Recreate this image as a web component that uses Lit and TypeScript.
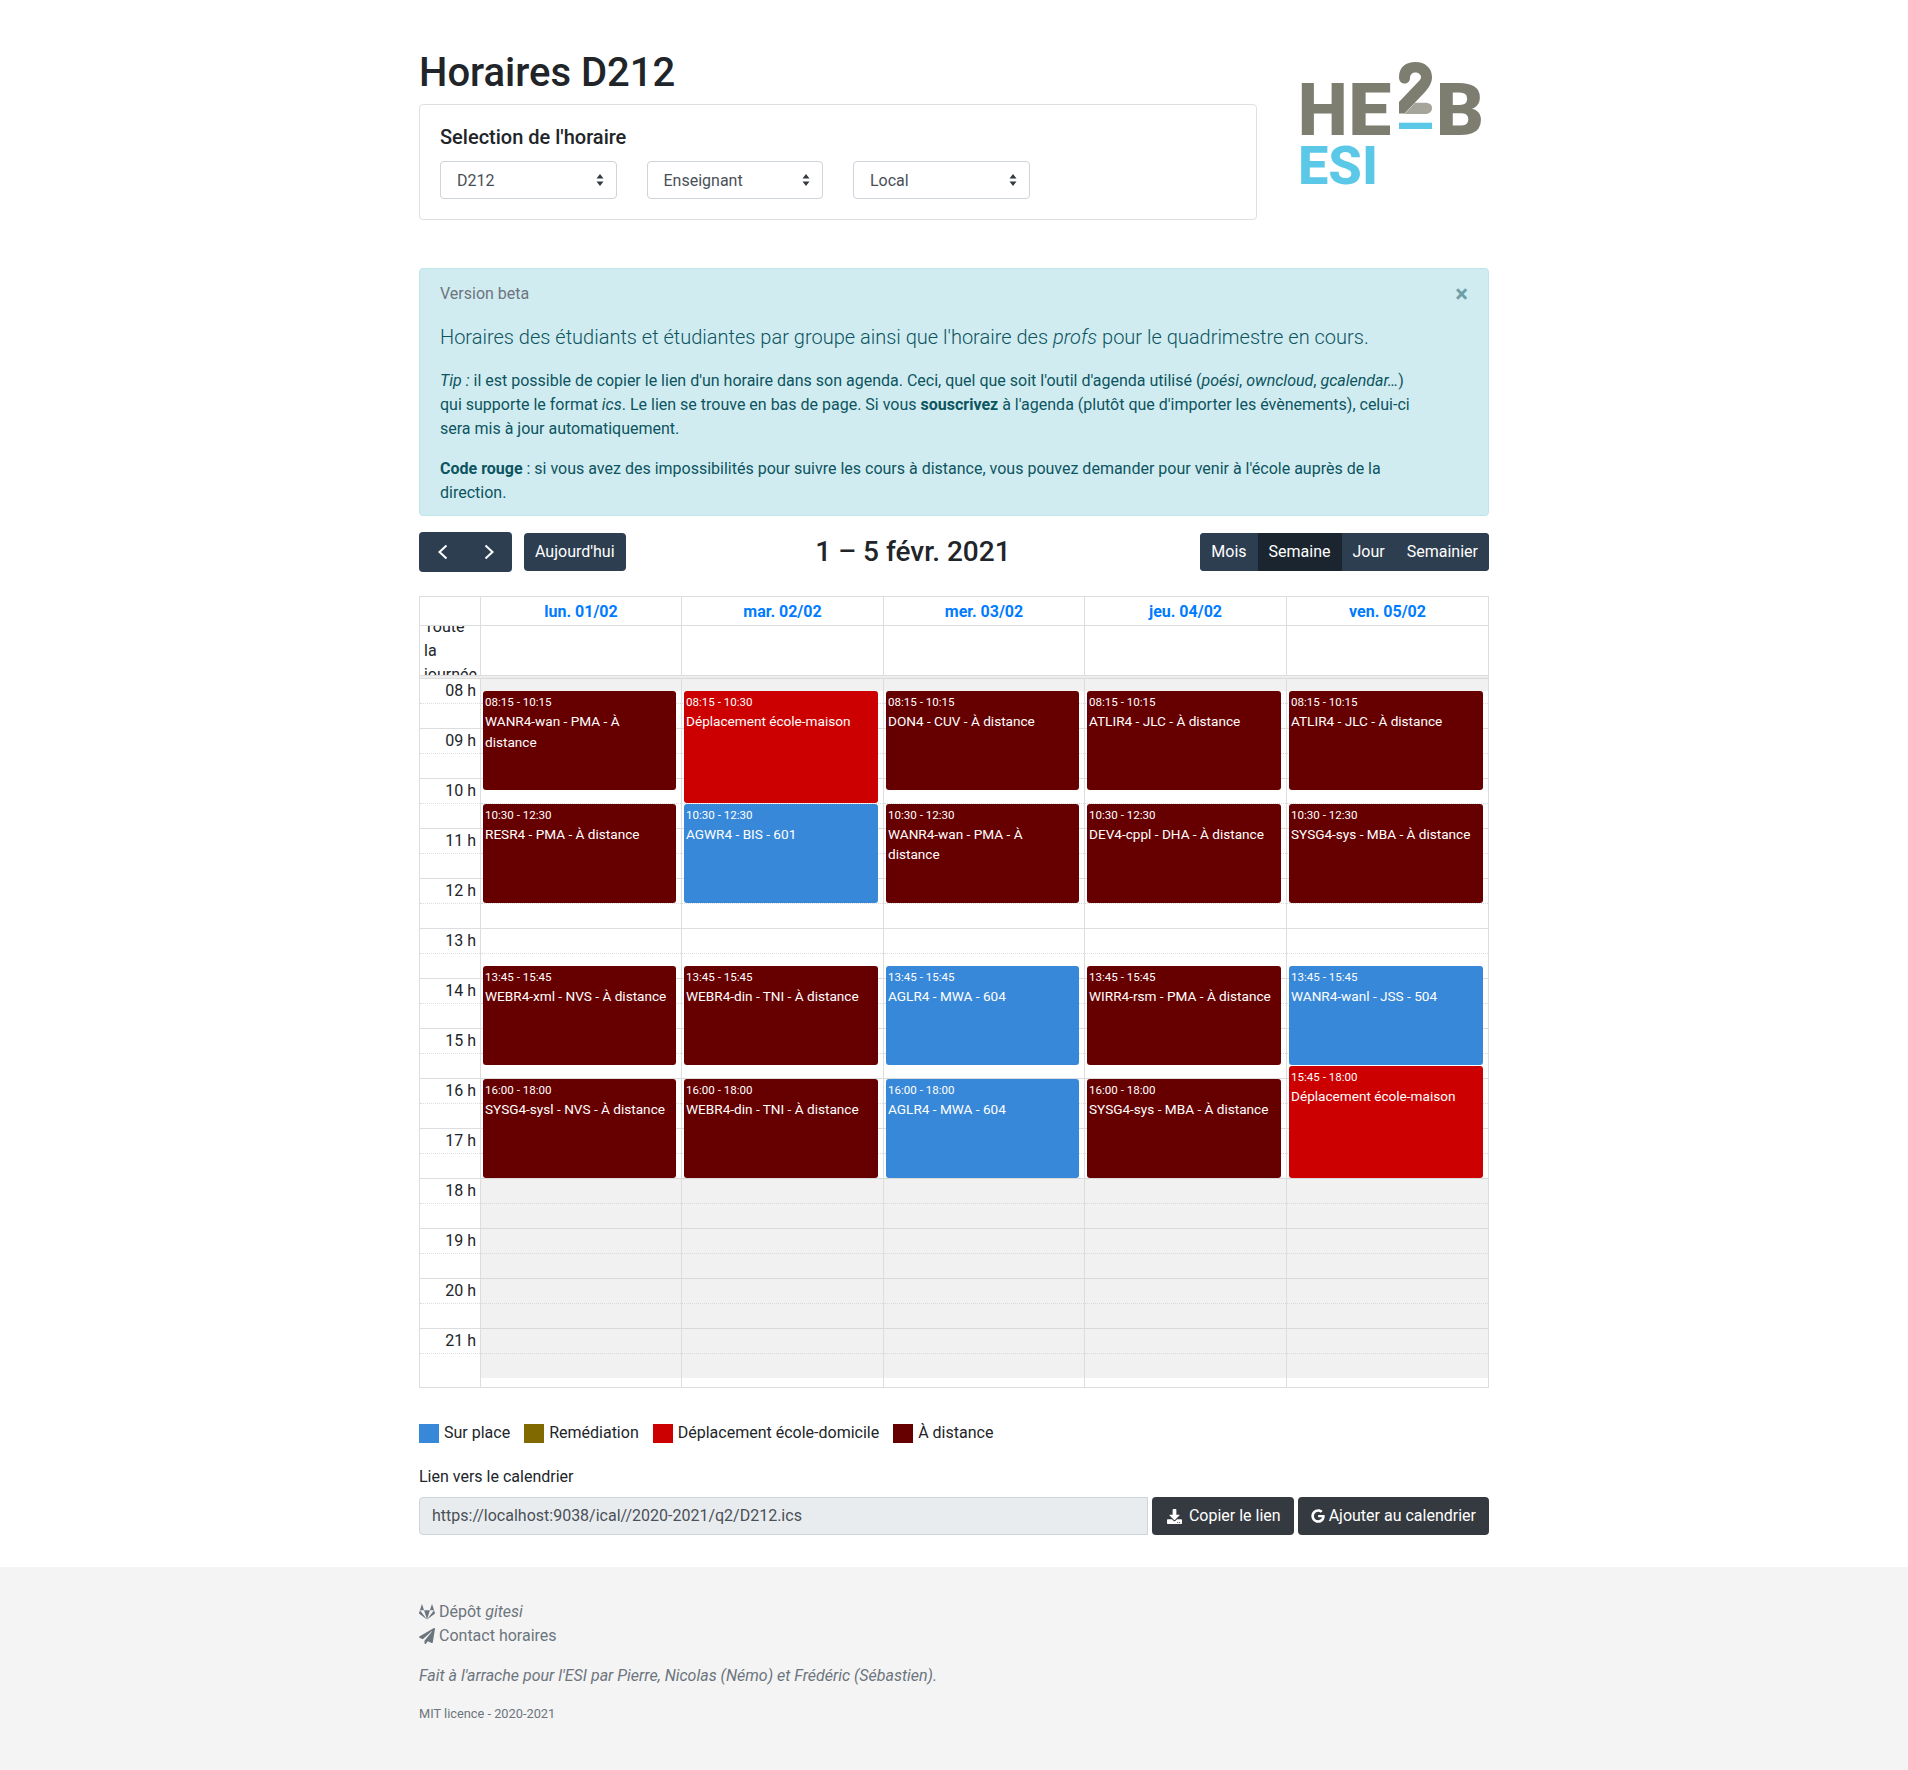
import { LitElement, html, css, svg } from 'lit';
import { customElement } from 'lit/decorators.js';

// Event kinds and their colours
const COLORS: Record<string, string> = {
  dist: '#660000',
  red: '#cc0000',
  place: '#3788d8',
  rem: '#806a00',
};

interface CalEvent {
  day: number;
  start: string;
  end: string;
  title: string;
  kind: string;
}

const EVENTS: CalEvent[] = [
  { day: 0, start: '08:15', end: '10:15', title: 'WANR4-wan - PMA - À distance', kind: 'dist' },
  { day: 0, start: '10:30', end: '12:30', title: 'RESR4 - PMA - À distance', kind: 'dist' },
  { day: 0, start: '13:45', end: '15:45', title: 'WEBR4-xml - NVS - À distance', kind: 'dist' },
  { day: 0, start: '16:00', end: '18:00', title: 'SYSG4-sysl - NVS - À distance', kind: 'dist' },
  { day: 1, start: '08:15', end: '10:30', title: 'Déplacement école-maison', kind: 'red' },
  { day: 1, start: '10:30', end: '12:30', title: 'AGWR4 - BIS - 601', kind: 'place' },
  { day: 1, start: '13:45', end: '15:45', title: 'WEBR4-din - TNI - À distance', kind: 'dist' },
  { day: 1, start: '16:00', end: '18:00', title: 'WEBR4-din - TNI - À distance', kind: 'dist' },
  { day: 2, start: '08:15', end: '10:15', title: 'DON4 - CUV - À distance', kind: 'dist' },
  { day: 2, start: '10:30', end: '12:30', title: 'WANR4-wan - PMA - À distance', kind: 'dist' },
  { day: 2, start: '13:45', end: '15:45', title: 'AGLR4 - MWA - 604', kind: 'place' },
  { day: 2, start: '16:00', end: '18:00', title: 'AGLR4 - MWA - 604', kind: 'place' },
  { day: 3, start: '08:15', end: '10:15', title: 'ATLIR4 - JLC - À distance', kind: 'dist' },
  { day: 3, start: '10:30', end: '12:30', title: 'DEV4-cppl - DHA - À distance', kind: 'dist' },
  { day: 3, start: '13:45', end: '15:45', title: 'WIRR4-rsm - PMA - À distance', kind: 'dist' },
  { day: 3, start: '16:00', end: '18:00', title: 'SYSG4-sys - MBA - À distance', kind: 'dist' },
  { day: 4, start: '08:15', end: '10:15', title: 'ATLIR4 - JLC - À distance', kind: 'dist' },
  { day: 4, start: '10:30', end: '12:30', title: 'SYSG4-sys - MBA - À distance', kind: 'dist' },
  { day: 4, start: '13:45', end: '15:45', title: 'WANR4-wanl - JSS - 504', kind: 'place' },
  { day: 4, start: '15:45', end: '18:00', title: 'Déplacement école-maison', kind: 'red' },
];

const DAYS = ['lun. 01/02', 'mar. 02/02', 'mer. 03/02', 'jeu. 04/02', 'ven. 05/02'];
const HOURS = [8, 9, 10, 11, 12, 13, 14, 15, 16, 17, 18, 19, 20, 21];
const HOUR_PX = 50;

// Pixels below the start of the grid (08:00)
const toPx = (t: string) => {
  const [h, m] = t.split(':').map(Number);
  return (h - 8 + m / 60) * HOUR_PX;
};

const ICONS = {
  download: 'M216 0h80c13.3 0 24 10.7 24 24v168h87.7c17.8 0 26.7 21.5 14.1 34.1L269.7 378.3c-7.5 7.5-19.8 7.5-27.3 0L90.1 226.1c-12.6-12.6-3.7-34.1 14.1-34.1H192V24c0-13.3 10.7-24 24-24zm296 376v112c0 13.3-10.7 24-24 24H24c-13.3 0-24-10.7-24-24V376c0-13.3 10.7-24 24-24h146.7l49 49c20.1 20.1 52.5 20.1 72.6 0l49-49H488c13.3 0 24 10.7 24 24zm-124 88c0-11-9-20-20-20s-20 9-20 20 9 20 20 20 20-9 20-20zm64 0c0-11-9-20-20-20s-20 9-20 20 9 20 20 20 20-9 20-20z',
  google: 'M488 261.8C488 403.3 391.1 504 248 504 110.8 504 0 393.2 0 256S110.8 8 248 8c66.8 0 123 24.5 166.3 64.9l-67.5 64.9C258.5 52.6 94.3 116.6 94.3 256c0 86.5 69.1 156.6 153.7 156.6 98.2 0 135-70.4 140.8-106.9H248v-85.3h236.1c2.3 12.7 3.9 24.9 3.9 41.4z',
  gitlab: 'M105.2 24.9c-3.1-8.9-15.7-8.9-18.9 0L29.8 199.7h132c-.1 0-56.6-174.8-56.6-174.8zM.9 287.7c-2.6 8 .3 16.9 7.1 22l247.9 184-226.2-294zm160.8-88l94.3 294 94.3-294zm349.4 88l-28.8-88-226.3 294 247.9-184c6.9-5.1 9.7-14 7.2-22zM425.7 24.9c-3.1-8.9-15.7-8.9-18.9 0l-56.6 174.8h132z',
  plane: 'M476 3.2L12.5 270.6c-18.1 10.4-15.8 35.6 2.2 43.2L121 358.4l287.3-253.2c5.5-4.9 13.3 2.6 8.6 8.3L176 407v80.5c0 23.6 28.5 32.9 42.5 15.8L282 426l124.6 52.2c14.2 6 30.4-2.9 33-18.2l72-432C515 7.8 493.3-6.8 476 3.2z',
};

const faIcon = (d: string, vbW = 512) =>
  html`<svg class="fa" viewBox="0 0 ${vbW} 512" fill="currentColor"><path d=${d}></path></svg>`;

const selectArrows = svg`<svg class="arrows" viewBox="0 0 8 12"><path d="M4 0 L7.5 4.5 H0.5 Z M4 12 L0.5 7.5 H7.5 Z" fill="#343a40"></path></svg>`;

@customElement('app-root')
export class AppRoot extends LitElement {
  static styles = css`
    :host {
      display: block;
      font-family: Roboto, "Liberation Sans", sans-serif;
      font-size: 16px;
      line-height: 1.5;
      color: #212529;
      background: #fff;
    }
    * { box-sizing: border-box; }
    .container { width: 1070px; margin: 0 auto; }

    .head { display: flex; padding-top: 49px; justify-content: space-between; height: 268px; }
    .head-left { width: 838px; }
    h1 { margin: 0 0 7px; font-size: 40px; font-weight: 500; line-height: 48px; }
    .card { border: 1px solid #dfdfdf; border-radius: 4px; padding: 20px; height: 116px; }
    h5 { margin: 0 0 12px; font-size: 20px; font-weight: 500; line-height: 24px; }
    .selects { display: flex; gap: 30px; }
    .select {
      width: 176.5px; height: 38px; border: 1px solid #ced4da; border-radius: 4px;
      padding: 2px 12px 0 16px; display: flex; align-items: center; justify-content: space-between;
      color: #495057;
    }
    .arrows { width: 8px; height: 12px; margin-top: -2px; }
    .logo { width: 192px; height: 132px; margin-top: 9px; flex: none; }

    .alert {
      position: relative; background: #d1ecf1; border: 1px solid #bee5eb; border-radius: 4px;
      color: #0c5460; padding: 13px 20px; height: 248px;
    }
    .alert .muted { color: #6c757d; margin-bottom: 16px; }
    .alert .lead { font-size: 20px; font-weight: 300; line-height: 30px; margin-bottom: 17px; }
    .alert p { margin: 0 0 16px; width: 980px; }
    .close {
      position: absolute; top: 13px; right: 20px; font-size: 24px; font-weight: 700; line-height: 24px;
      color: #0c5460; opacity: .5;
    }

    .toolbar { display: flex; align-items: center; justify-content: space-between; margin-top: 16px; height: 40px; }
    .tb-side { display: flex; align-items: center; gap: 12px; }
    .btn-fc {
      background: #2c3e50; color: #fff; height: 38px; padding: 0 11px; display: flex; align-items: center;
      border-radius: 4px;
    }
    .nav { height: 40px; width: 93px; padding: 0; justify-content: center; gap: 30px; }
    .nav svg { width: 16px; height: 16px; }
    .group { display: flex; height: 38px; background: #2c3e50; border-radius: 4px; overflow: hidden; }
    .group .btn-fc { border-radius: 0; }
    .group .active { background: #1a252f; }
    .title { font-size: 28px; font-weight: 500; line-height: 40px; white-space: nowrap; }

    .cal { margin-top: 24px; border: 1px solid #ddd; }
    .row { display: grid; grid-template-columns: 60px 201px 202px 201px 202px 202px; }
    .row > * { border-left: 1px solid #ddd; }
    .row > *:first-child { border-left: none; }
    .hdr { height: 29px; border-bottom: 1px solid #ddd; }
    .hdr .day { text-align: center; font-weight: 700; color: #007bff; line-height: 28px; padding-top: 1px; }
    .allday { height: 49px; overflow: hidden; }
    .allday .axis { padding: 0 4px; display: flex; flex-direction: column; justify-content: center; height: 49px; }
    .allday .axis span { display: block; width: 52px; }
    .divider { height: 3px; border-top: 1px solid #ddd; background: #eee; }

    .body { display: grid; grid-template-columns: 60px 201px 202px 201px 202px 202px; height: 709px; }
    .slot { height: 25px; border-top: 1px solid #ddd; }
    .slot.minor { border-top: 1px dotted #ddd; }
    .axis-slot { text-align: right; padding-right: 4px; line-height: 23px; white-space: nowrap; }
    .col { position: relative; border-left: 1px solid #ddd; }
    .shade { position: absolute; left: 0; right: 0; background: rgba(208, 208, 208, .3); }
    .ev {
      position: absolute; left: 2px; right: 2.5%; border-radius: 3px; color: #fff;
      font-size: 13.6px; line-height: 20.4px; padding: 3px 8px 1px 2px; overflow: hidden;
    }
    .ev .t { font-size: 11.56px; line-height: 17.3px; white-space: nowrap; }

    .legend { display: flex; align-items: center; margin-top: 33px; height: 24px; }
    .sw { width: 20px; height: 19px; margin-right: 5px; }
    .legend span { margin-right: 14px; }
    .lbl { margin-top: 20px; line-height: 24px; }
    .link { display: flex; gap: 4px; margin-top: 8px; margin-bottom: 32px; }
    .input {
      flex: 1; height: 38px; background: #e9ecef; border: 1px solid #ced4da; border-radius: 4px 0 0 4px;
      padding: 0 12px; color: #495057; line-height: 36px;
    }
    .btn { background: #343a40; color: #fff; height: 38px; border-radius: 4px; padding: 0 13px; display: flex; align-items: center; gap: 4px; white-space: nowrap; }
    .fa { width: 1em; height: 1em; flex: none; }
    .btn .fa { width: 14px; height: 14px; }
    .btn .fa-box { width: 20px; display: flex; justify-content: center; }
    .btn .fa-box .fa { width: 15px; height: 15px; }

    footer { background: #f4f4f4; height: 204px; padding-top: 33px; color: #6c757d; }
    .f-link { display: flex; align-items: center; gap: 4px; line-height: 24px; }
    footer em { font-style: italic; }
    .made { margin: 16px 0; font-style: italic; line-height: 24px; }
    .mit { font-size: 12.8px; margin-top: 15px; line-height: 19px; }
  `;

  // The logo: letters stay real text, the "2" and its bar are shapes
  private _logo() {
    return html`<svg class="logo" viewBox="0 0 192 132">
      <g fill="#7e7e70" font-family="Roboto, 'Liberation Sans', sans-serif" font-weight="900" font-size="73">
        <text x="1" y="76.5" textLength="49.5" lengthAdjust="spacingAndGlyphs">H</text>
        <text x="51.25" y="76.5" textLength="43" lengthAdjust="spacingAndGlyphs">E</text>
        <text x="139" y="76.5" textLength="48" lengthAdjust="spacingAndGlyphs">B</text>
      </g>
      <path d="M102 19 C102 9 109 4 118.5 4 C128 4 135 10 135 19 C135 25 132 29 128 34 L107.5 55.5 H102 V44 L121 24 C123 22 124 21 124 19 C124 16.5 121 14.5 118.5 14.5 C115.5 14.5 113 16.5 113 20 C113 23.5 110.5 25.5 107.5 25.5 C104 25.5 102 23 102 19 Z" fill="#7e7e70"></path>
      <path d="M107.5 56 L118 44.7 H128 C133 44.7 135 47 135 50 C135 53.5 132.5 56 128 56 Z" fill="#a5a59b"></path>
      <rect x="102" y="64.7" width="33" height="6.3" fill="#5bc8e8"></rect>
      <text x="1" y="125.5" font-size="53.5" font-weight="800" font-family="Roboto, 'Liberation Sans', sans-serif" fill="#5bc8e8" textLength="80" lengthAdjust="spacingAndGlyphs">ESI</text>
    </svg>`;
  }

  private _event(e: CalEvent) {
    const top = toPx(e.start) + 0.5;
    const height = toPx(e.end) - toPx(e.start) - 1;
    return html`<div class="ev" style="top:${top}px;height:${height}px;background:${COLORS[e.kind]}">
      <div class="t">${e.start} - ${e.end}</div>
      <div class="n">${e.title}</div>
    </div>`;
  }

  private _slots() {
    return HOURS.map(() => html`<div class="slot"></div><div class="slot minor"></div>`);
  }

  render() {
    return html`
      <div class="container">
        <div class="head">
          <div class="head-left">
            <h1>Horaires D212</h1>
            <div class="card">
              <h5>Selection de l'horaire</h5>
              <div class="selects">
                <div class="select"><span>D212</span>${selectArrows}</div>
                <div class="select"><span>Enseignant</span>${selectArrows}</div>
                <div class="select"><span>Local</span>${selectArrows}</div>
              </div>
            </div>
          </div>
          ${this._logo()}
        </div>

        <div class="alert">
          <div class="close">×</div>
          <div class="muted">Version beta</div>
          <div class="lead">Horaires des étudiants et étudiantes par groupe ainsi que l'horaire des <em>profs</em> pour le quadrimestre en cours.</div>
          <p><em>Tip :</em> il est possible de copier le lien d'un horaire dans son agenda. Ceci, quel que soit l'outil d'agenda utilisé (<em>poési</em>, <em>owncloud</em>, <em>gcalendar…</em>) qui supporte le format <em>ics</em>. Le lien se trouve en bas de page. Si vous <b>souscrivez</b> à l'agenda (plutôt que d'importer les évènements), celui-ci sera mis à jour automatiquement.</p>
          <p><b>Code rouge</b> : si vous avez des impossibilités pour suivre les cours à distance, vous pouvez demander pour venir à l'école auprès de la direction.</p>
        </div>

        <div class="toolbar">
          <div class="tb-side">
            <div class="btn-fc nav">
              <svg viewBox="0 0 16 16" fill="none" stroke="#fff" stroke-width="2"><path d="M11.5 1.5 L4.5 8 L11.5 14.5"></path></svg>
              <svg viewBox="0 0 16 16" fill="none" stroke="#fff" stroke-width="2"><path d="M4.5 1.5 L11.5 8 L4.5 14.5"></path></svg>
            </div>
            <div class="btn-fc">Aujourd'hui</div>
          </div>
          <div class="title">1 – 5 févr. 2021</div>
          <div class="tb-side">
            <div class="group">
              <div class="btn-fc">Mois</div>
              <div class="btn-fc active">Semaine</div>
              <div class="btn-fc">Jour</div>
              <div class="btn-fc">Semainier</div>
            </div>
          </div>
        </div>

        <div class="cal">
          <div class="row hdr">
            <div></div>
            ${DAYS.map((d) => html`<div class="day">${d}</div>`)}
          </div>
          <div class="row allday">
            <div class="axis"><span>Toute la journée</span></div>
            ${DAYS.map(() => html`<div></div>`)}
          </div>
          <div class="divider"></div>
          <div class="body">
            <div>
              ${HOURS.map((h) => html`
                <div class="slot axis-slot">${String(h).padStart(2, '0')} h</div>
                <div class="slot minor"></div>
              `)}
            </div>
            ${DAYS.map((_, i) => html`
              <div class="col">
                ${this._slots()}
                <div class="shade" style="top:0;height:12.5px"></div>
                <div class="shade" style="top:${toPx('18:00')}px;height:${toPx('22:00') - toPx('18:00')}px"></div>
                ${EVENTS.filter((e) => e.day === i).map((e) => this._event(e))}
              </div>
            `)}
          </div>
        </div>

        <div class="legend">
          <div class="sw" style="background:${COLORS.place}"></div><span>Sur place</span>
          <div class="sw" style="background:${COLORS.rem}"></div><span>Remédiation</span>
          <div class="sw" style="background:${COLORS.red}"></div><span>Déplacement école-domicile</span>
          <div class="sw" style="background:${COLORS.dist}"></div><span>À distance</span>
        </div>

        <div class="lbl">Lien vers le calendrier</div>
        <div class="link">
          <div class="input">https://localhost:9038/ical//2020-2021/q2/D212.ics</div>
          <div class="btn"><span class="fa-box">${faIcon(ICONS.download)}</span> Copier le lien</div>
          <div class="btn">${faIcon(ICONS.google, 488)} Ajouter au calendrier</div>
        </div>
      </div>

      <footer>
        <div class="container">
          <div class="f-link">${faIcon(ICONS.gitlab)}<span>Dépôt <em>gitesi</em></span></div>
          <div class="f-link">${faIcon(ICONS.plane)}<span>Contact horaires</span></div>
          <div class="made">Fait à l'arrache pour l'ESI par Pierre, Nicolas (Némo) et Frédéric (Sébastien).</div>
          <div class="mit">MIT licence - 2020-2021</div>
        </div>
      </footer>
    `;
  }
}
